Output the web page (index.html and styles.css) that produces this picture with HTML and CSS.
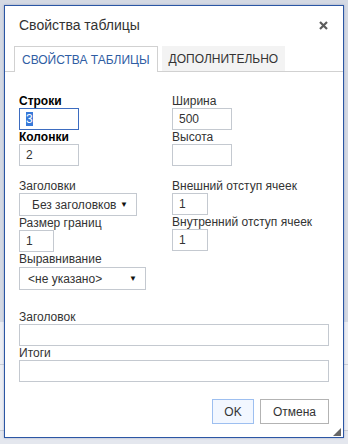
FILE: index.html
```html
<!DOCTYPE html>
<html lang="ru">
<head>
  <meta charset="UTF-8" />
  <meta name="viewport" content="width=device-width, initial-scale=1.0" />
  <title>Свойства таблицы</title>
  <link rel="stylesheet" href="styles.css">
</head>
<body>
  <div class="dialog">
    <div class="dialog-header">
      <span class="dialog-title">Свойства таблицы</span>
      <button class="close-btn" title="Закрыть">
        <svg width="9" height="9" viewBox="0 0 9 9">
          <path d="M1 1 L8 8 M8 1 L1 8" stroke="#5c5c5c" stroke-width="2.2" />
        </svg>
      </button>
    </div>

    <div class="tabs">
      <div class="tab active">Свойства таблицы</div>
      <div class="tab">Дополнительно</div>
    </div>

    <div class="dialog-body">
      <!-- rows / width -->
      <div class="grid">
        <div class="col">
          <label class="strong">Строки</label>
          <div class="field w60 focused"><span class="selected">3</span></div>
          <label class="strong">Колонки</label>
          <input class="field w60" type="text" value="2">
        </div>
        <div class="col">
          <label>Ширина</label>
          <input class="field w60" type="text" value="500">
          <label>Высота</label>
          <input class="field w60" type="text" value="">
        </div>
      </div>

      <div class="grid group">
        <div class="col">
          <label>Заголовки</label>
          <div class="select sel-headers"><span>Без заголовков</span><span class="arrow">▼</span></div>
          <label>Размер границ</label>
          <input class="field w35" type="text" value="1">
          <label>Выравнивание</label>
          <div class="select sel-align"><span>&lt;не указано&gt;</span><span class="arrow">▼</span></div>
        </div>
        <div class="col">
          <label>Внешний отступ ячеек</label>
          <input class="field w36" type="text" value="1">
          <label>Внутренний отступ ячеек</label>
          <input class="field w36" type="text" value="1">
        </div>
      </div>

      <div class="col group wide">
        <label>Заголовок</label>
        <input class="field full" type="text" value="">
        <label>Итоги</label>
        <input class="field full" type="text" value="">
      </div>
    </div>

    <div class="dialog-footer">
      <button class="btn btn-ok">OK</button>
      <button class="btn btn-cancel">Отмена</button>
    </div>

    <div class="resize-grip"></div>
  </div>
</body>
</html>
```

FILE: styles.css
```css
* {
  box-sizing: border-box;
}

html,
body {
  height: 100%;
}

body {
  margin: 0;
  font-family: "Liberation Sans", Arial, sans-serif;
  font-size: 12px;
  color: #333;
  background:
    linear-gradient(to bottom,
      #d4d9e3 0, #d4d9e3 322px,
      #eceef3 322px, #eceef3 364px,
      #c9ced8 364px, #c9ced8 365px,
      #eceef3 365px, #eceef3 430px,
      #c9ced8 430px, #c9ced8 431px,
      #e4e7ee 431px);
  overflow: hidden;
}

.dialog {
  position: relative;
  width: 340px;
  height: 433px;
  margin: 5px 4px 0;
  background: #fff;
  border: 1px solid #2b56a4;
  box-shadow: 0 0 2px rgba(40, 70, 130, 0.35);
  display: flex;
  flex-direction: column;
}

.dialog-header {
  height: 40px;
  display: flex;
  align-items: center;
  justify-content: space-between;
  padding: 0 14px 2px 14px;
}

.dialog-title {
  font-size: 14px;
  color: #333;
}

.close-btn {
  border: none;
  background: none;
  padding: 0;
  margin-right: 1px;
  margin-top: 1px;
  cursor: pointer;
  display: flex;
}

.tabs {
  display: flex;
  gap: 4px;
  padding-left: 9px;
  height: 26px;
  border-bottom: 1px solid #d1d1d1;
}

.tab {
  height: 25px;
  padding: 1px 7px 0 7px;
  display: flex;
  align-items: center;
  text-transform: uppercase;
  font-size: 12px;
  color: #333;
  background: #f3f3f3;
}

.tab.active {
  height: 26px;
  padding: 0 7px 0 7px;
  color: #2f5da3;
  background: #fff;
  border: 1px solid #d1d1d1;
  border-bottom: none;
}

.dialog-body {
  padding: 22px 14px 0;
  flex: 1;
}

.grid {
  display: grid;
  grid-template-columns: 153px 1fr;
}

.group {
  margin-top: 13px;
}

.group.wide {
  margin-top: 20px;
}

.col {
  display: flex;
  flex-direction: column;
  align-items: flex-start;
}

label {
  display: block;
  line-height: 14px;
  height: 14px;
}

label.strong {
  font-weight: bold;
  color: #000;
}

.field {
  height: 22px;
  border: 1px solid #c4c9d0;
  background: #fff;
  padding: 0 6px;
  font-family: inherit;
  font-size: 12px;
  color: #333;
  margin: 0;
  outline: none;
  display: flex;
  align-items: center;
}

.field.focused {
  border-color: #3d6cc0;
}

.selected {
  background: #3879d9;
  color: #fff;
  line-height: 14px;
}

.w60 { width: 60px; }
.w35 { width: 35px; }
.w36 { width: 36px; }
.full { width: 310px; }

.select {
  height: 23px;
  border: 1px solid #c4c9d0;
  display: flex;
  align-items: center;
  justify-content: space-between;
  color: #333;
}

.select .arrow {
  font-size: 8px;
  color: #111;
}

.sel-headers {
  width: 118px;
  padding: 0 8px 0 12px;
}

.sel-align {
  width: 127px;
  padding: 0 8px 0 8px;
  margin-top: 1px;
}

.dialog-footer {
  display: flex;
  justify-content: flex-end;
  gap: 6px;
  padding: 0 14px 13px;
}

.btn {
  height: 25px;
  padding: 0;
  font-family: inherit;
  font-size: 12px;
  color: #333;
  background: #fff;
  border: 1px solid #b3b3b3;
  cursor: pointer;
}

.btn-ok {
  width: 42px;
  background: #f2f7ff;
  border-color: #9dbff0;
}

.btn-cancel {
  width: 69px;
}

.resize-grip {
  position: absolute;
  right: 2px;
  bottom: 1px;
  width: 0;
  height: 0;
  border-left: 8px solid transparent;
  border-bottom: 8px solid #666;
}
```
